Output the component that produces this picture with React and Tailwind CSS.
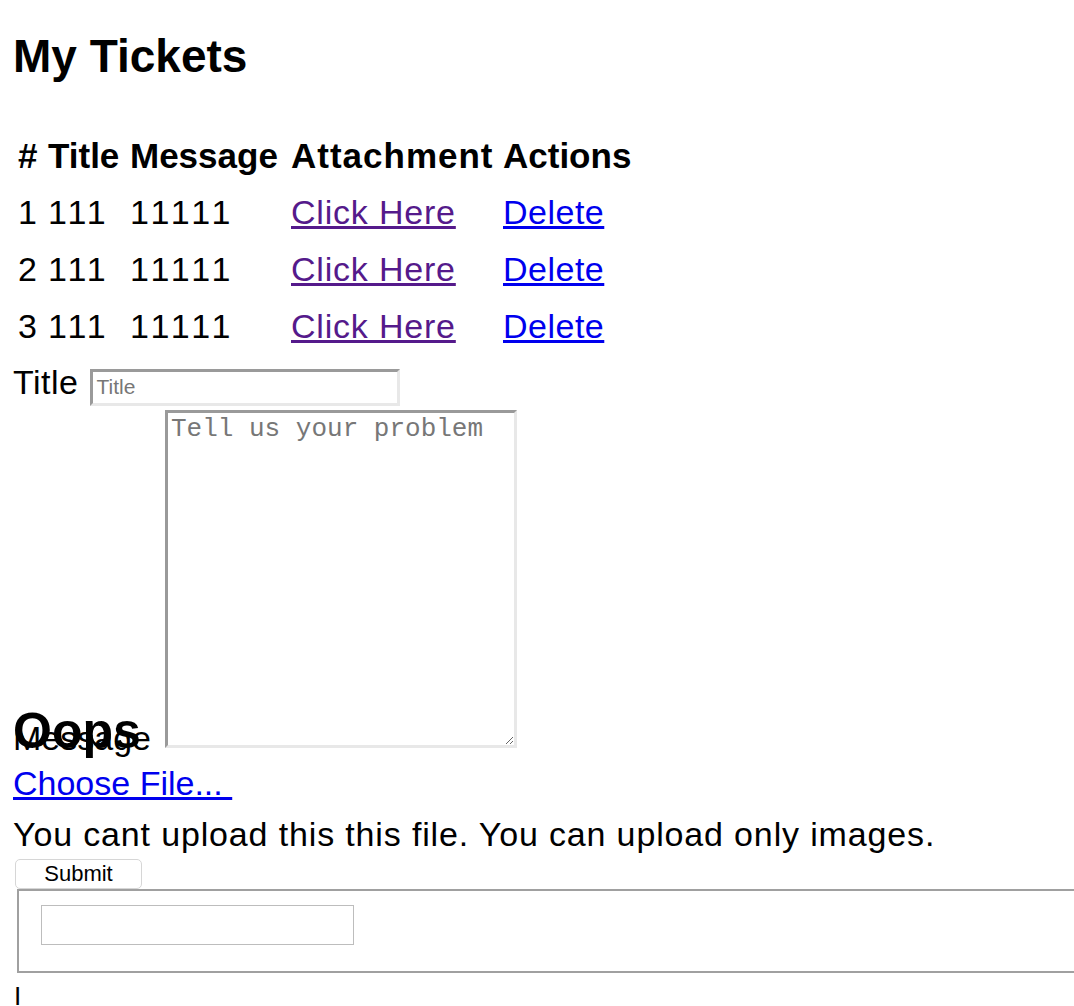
import React from 'react';

const tickets = [
  { id: 1, title: '111', message: '11111' },
  { id: 2, title: '111', message: '11111' },
  { id: 3, title: '111', message: '11111' },
];

const App = () => {
  return (
    <div className="relative pt-[31px] pl-[13px] font-['Liberation_Sans',Arial,sans-serif] text-black bg-white">
      {/* Header */}
      <h1 className="text-[46px] leading-[50px] font-bold">My Tickets</h1>

      {/* Tickets table */}
      <table className="mt-[44px] border-separate border-spacing-[4px] -ml-px">
        <thead>
          <tr className="text-[35px] leading-[49px] font-bold text-left whitespace-nowrap">
            <th className="w-[26px] p-[2px]">#</th>
            <th className="w-[78px] p-[2px]">Title</th>
            <th className="w-[157px] p-[2px]">Message</th>
            <th className="w-[208px] p-[2px] tracking-[1px]">Attachment</th>
            <th className="w-[136px] p-[2px]">Actions</th>
          </tr>
        </thead>
        <tbody>
          {tickets.map((t) => (
            <tr key={t.id} className="text-[34px] leading-[49px] whitespace-nowrap">
              <td className="p-[2px]">{t.id}</td>
              <td className="p-[2px] tracking-[3px]">{t.title}</td>
              <td className="p-[2px] tracking-[4px]">{t.message}</td>
              <td className="p-[2px]">
                <a href="#" className="text-[#551a8b] underline tracking-[0.8px]">Click Here</a>
              </td>
              <td className="p-[2px]">
                <a href="#" className="text-[#0000ee] underline tracking-[0.5px]">Delete</a>
              </td>
            </tr>
          ))}
        </tbody>
      </table>

      {/* New ticket form */}
      <form onSubmit={(e) => e.preventDefault()}>
        <div className="mt-[5px] flex items-baseline">
          <label className="text-[34px] leading-[40px] mr-[12px] tracking-[0.5px]">Title</label>
          <input
            type="text"
            placeholder="Title"
            className="w-[310px] h-[37px] px-[3px] text-[21px] border-[3px] border-t-[#9a9a9a] border-l-[#9a9a9a] border-r-[#e8e8e8] border-b-[#e8e8e8] placeholder:text-[#777] outline-none"
          />
        </div>

        <div className="mt-[4px] flex items-end">
          <label className="text-[34px] leading-[20px] w-[152px]">Message</label>
          <textarea
            placeholder="Tell us your problem"
            className="w-[352px] h-[338px] px-[3px] pt-px text-[26px] leading-[30px] font-['Liberation_Mono','Courier_New',monospace] border-[3px] border-t-[#9a9a9a] border-l-[#9a9a9a] border-r-[#e8e8e8] border-b-[#e8e8e8] placeholder:text-[#777] outline-none"
          />
        </div>

        <a href="#" className="block mt-[11px] w-fit text-[34px] leading-[48px] text-[#0000ee] underline whitespace-pre">
          {'Choose File... '}
        </a>

        <p className="mt-[3px] text-[34px] leading-[48px] tracking-[0.85px]">
          You cant upload this this file. You can upload only images.
        </p>

        <button
          type="submit"
          className="ml-[2px] mt-px w-[127px] h-[30px] bg-white border border-[#d6d6d6] rounded-[5px] text-[22px] leading-[28px] text-black"
        >
          Submit
        </button>
      </form>

      {/* Search box */}
      <div className="ml-[4px] h-[84px] border-2 border-r-0 border-[#a0a0a0] pl-[22px] pt-[14px]">
        <input type="text" className="w-[313px] h-[40px] border border-[#bdbdbd] outline-none" />
      </div>

      <div className="mt-[8px] ml-[1px] text-[26px] leading-[30px]">I</div>

      {/* Error title overlapping the form */}
      <div className="absolute top-[706px] left-[13px] text-[50px] leading-[50px] font-bold">Oops</div>
    </div>
  );
};

export default App;
